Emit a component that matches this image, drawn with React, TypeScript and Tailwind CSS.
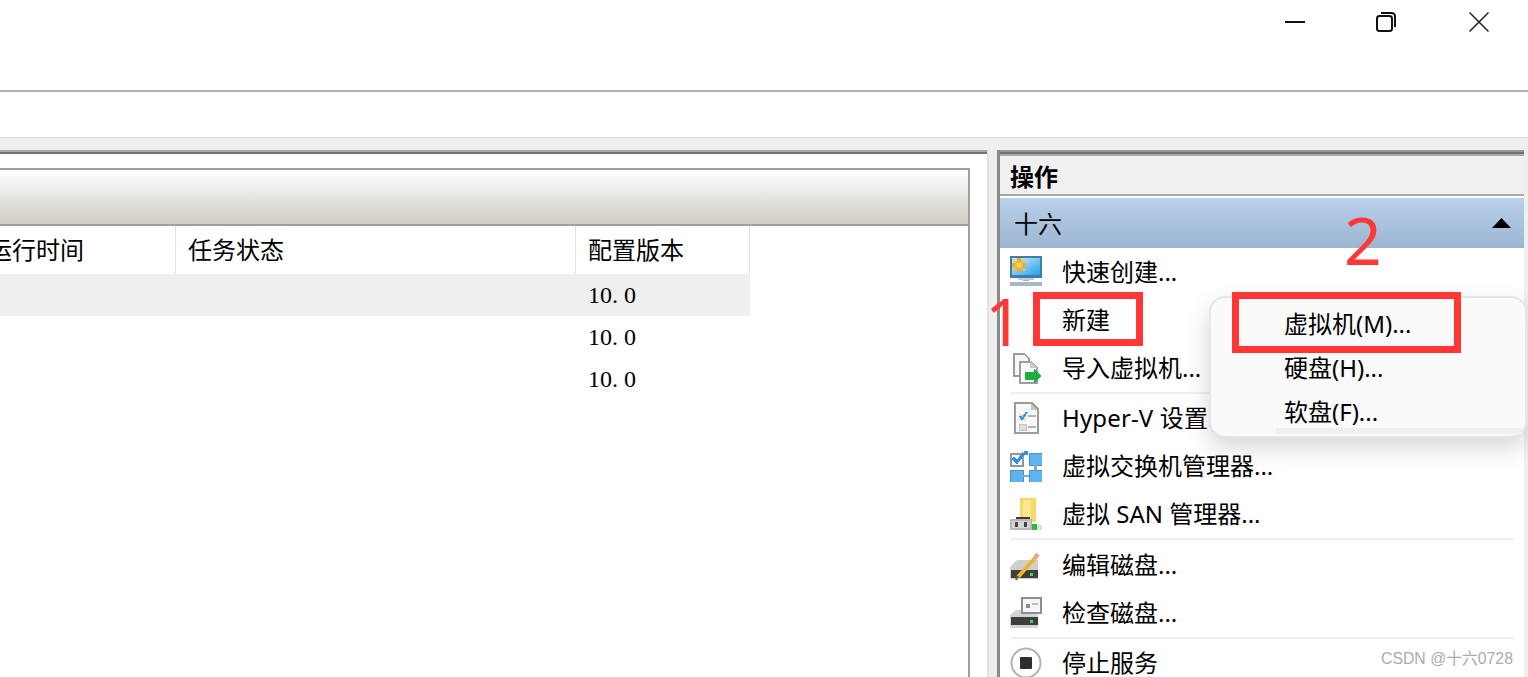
import React from "react";

const Monitor = () => (
  <svg width="32" height="32" viewBox="0 0 32 32" shapeRendering="crispEdges">
    <defs>
      <linearGradient id="mon" x1="0" y1="0" x2="1" y2="1">
        <stop offset="0" stopColor="#d0edfd" />
        <stop offset="1" stopColor="#22a0ee" />
      </linearGradient>
    </defs>
    <rect x="0" y="0" width="32" height="22" fill="#3d7ea8" />
    <rect x="2" y="2" width="28" height="17" fill="url(#mon)" />
    <rect x="13" y="22" width="6" height="3" fill="#9fb0c0" />
    <rect x="8" y="22" width="16" height="2" fill="#c4ced8" />
    <rect x="0" y="26" width="32" height="4" fill="#a9b8c7" />
    <rect x="7" y="2" width="4" height="14" fill="#f7a823" />
    <rect x="2" y="7" width="14" height="4" fill="#f7a823" />
    <rect x="5" y="5" width="8" height="8" fill="#f9b733" />
    <rect x="7" y="7" width="4" height="4" fill="#ffd76a" />
    <rect x="3" y="3" width="2" height="2" fill="#fbc34a" />
    <rect x="13" y="3" width="2" height="2" fill="#fbc34a" />
    <rect x="3" y="13" width="2" height="2" fill="#fbc34a" />
    <rect x="13" y="13" width="2" height="2" fill="#fbc34a" />
  </svg>
);

const ImportIcon = () => (
  <svg width="32" height="32" viewBox="0 0 32 32" shapeRendering="crispEdges">
    <path d="M3.5 1.5H14L19 6.5V23.5H3.5Z" fill="#f6f6f6" stroke="#9a9a9a" strokeWidth="2" />
    <path d="M9.5 9.5H21L26.5 15V30.5H9.5Z" fill="#fafafa" stroke="#9e9e9e" strokeWidth="2" />
    <path d="M20 9L27 16H20Z" fill="#c9c9c9" />
    <path d="M15 20H24V17L32 24L24 31V28H15Z" fill="#1fae3c" />
  </svg>
);

const SettingsIcon = () => (
  <svg width="32" height="32" viewBox="0 0 32 32" shapeRendering="crispEdges">
    <path d="M5 1H22L28 7V31H5Z" fill="#f9f9f9" stroke="#9c9c9c" strokeWidth="2" />
    <path d="M21 2L27 8H21Z" fill="#c4c4c4" />
    <rect x="9" y="12" width="7" height="7" fill="#d7e7f5" />
    <path d="M10 14L12 17L17 10" fill="none" stroke="#3b8ee6" strokeWidth="2" />
    <rect x="18" y="13" width="8" height="2" fill="#b5b5b5" />
    <rect x="9" y="22" width="7" height="6" fill="#dedede" stroke="#c4c4c4" />
    <rect x="18" y="24" width="8" height="2" fill="#b5b5b5" />
  </svg>
);

const SwitchIcon = () => (
  <svg width="32" height="32" viewBox="0 0 32 32" shapeRendering="crispEdges">
    <rect x="1" y="4" width="12" height="12" fill="#f4f4f4" stroke="#8d98a3" strokeWidth="2" />
    <path d="M3 8L7 12L14 3" fill="none" stroke="#2f8fe8" strokeWidth="3" />
    <rect x="14" y="1" width="4" height="4" fill="#2f8fe8" />
    <rect x="19" y="3" width="13" height="12" fill="#5cb4f0" stroke="#4b93c4" />
    <rect x="0" y="20" width="13" height="12" fill="#5cb4f0" stroke="#4b93c4" />
    <rect x="19" y="20" width="13" height="12" fill="#5cb4f0" stroke="#4b93c4" />
    <rect x="24" y="15" width="3" height="5" fill="#8aa4b8" />
    <rect x="13" y="25" width="6" height="2" fill="#8aa4b8" />
  </svg>
);

const SanIcon = () => (
  <svg width="32" height="32" viewBox="0 0 32 32" shapeRendering="crispEdges">
    <rect x="10" y="0" width="16" height="24" fill="#f7d768" />
    <rect x="13" y="2" width="8" height="20" fill="#fbe88f" />
    <rect x="6" y="19" width="14" height="3" fill="#3a3a3a" />
    <rect x="0" y="21" width="22" height="11" fill="#b9b9b9" />
    <rect x="2" y="23" width="18" height="7" fill="#d4d4d4" />
    <rect x="5" y="24" width="3" height="5" fill="#444" />
    <rect x="14" y="24" width="3" height="5" fill="#444" />
    <rect x="22" y="26" width="5" height="6" fill="#35b34a" />
    <rect x="27" y="27" width="5" height="5" fill="#cfe8d0" />
  </svg>
);

const EditDiskIcon = () => (
  <svg width="32" height="32" viewBox="0 0 32 32">
    <path d="M0 18L7 11H28V30H0Z" fill="#cfcfcf" />
    <rect x="1" y="21" width="27" height="8" fill="#3f3f3f" />
    <rect x="20" y="24" width="3" height="3" fill="#3bdc55" />
    <path d="M8 28L25 9" stroke="#f0b428" strokeWidth="4" />
    <path d="M25 9L28 5" stroke="#f09a9a" strokeWidth="4" />
    <path d="M6 31L8 27" stroke="#7a5a20" strokeWidth="2" />
  </svg>
);

const CheckDiskIcon = () => (
  <svg width="32" height="32" viewBox="0 0 32 32" shapeRendering="crispEdges">
    <path d="M0 19L5 13H28V31H0Z" fill="#d4d4d4" />
    <rect x="1" y="20" width="27" height="8" fill="#3d3d3d" />
    <rect x="20" y="23" width="3" height="3" fill="#3bdc55" />
    <rect x="12" y="1" width="19" height="15" fill="#f6f6f6" stroke="#8e8e8e" strokeWidth="2" />
    <rect x="16" y="7" width="4" height="4" fill="#8e8e8e" />
    <rect x="22" y="6" width="6" height="2" fill="#bdbdbd" />
  </svg>
);

const StopIcon = () => (
  <svg width="32" height="32" viewBox="0 0 32 32">
    <circle cx="16" cy="16" r="14.5" fill="#fff" stroke="#b3b3b3" strokeWidth="2" />
    <rect x="10" y="10" width="12" height="12" rx="1" fill="#2e2e2e" />
  </svg>
);

function Action({ icon, label, className }: { icon?: React.ReactNode; label: string; className: string }) {
  return (
    <div className={`flex shrink-0 items-center pl-[10px] gap-5 whitespace-nowrap ${className}`}>
      <div className="w-8 h-8 shrink-0">{icon}</div>
      <span>{label}</span>
    </div>
  );
}

const Sep = () => <div className="h-[2px] shrink-0 ml-[10px] mr-[10px] bg-[#efefef]" />;

function Row({ shaded }: { shaded?: boolean }) {
  return (
    <div className={`grid grid-cols-[576px_174px] w-[750px] h-[42px] items-center ${shaded ? "bg-[#efefef]" : ""}`}>
      <div />
      <div className="pl-3 font-['Liberation_Serif','Noto_Sans_CJK_SC',serif]">
        10<span className="pr-1.5">.</span>0
      </div>
    </div>
  );
}

export default function App() {
  return (
    <div className="relative w-[1528px] h-[677px] overflow-hidden bg-white flex flex-col text-[24px] leading-none text-black font-['Noto_Sans','Noto_Sans_CJK_SC',sans-serif]">
      {/* title bar */}
      <div className="h-[90px] shrink-0 flex justify-end items-start pt-3 pr-[39px]">
        <svg width="20" height="20" viewBox="0 0 20 20" className="mr-[71px]">
          <rect x="0" y="9" width="20" height="2" fill="#111" />
        </svg>
        <svg width="20" height="20" viewBox="0 0 20 20" fill="none" stroke="#111" strokeWidth="2" className="mr-[73px]">
          <rect x="1" y="4" width="15" height="15" rx="2.5" />
          <path d="M5 1H15.5C17.5 1 19 2.5 19 4.5V15" />
        </svg>
        <svg width="20" height="20" viewBox="0 0 20 20" fill="none" stroke="#222" strokeWidth="1.5">
          <path d="M0.5 0.5L19.5 19.5M19.5 0.5L0.5 19.5" />
        </svg>
      </div>
      <div className="h-[2px] shrink-0 bg-[#b0b0b0]" />
      {/* toolbar */}
      <div className="h-[46px] shrink-0 bg-white border-b border-[#dcdcdc]" />
      {/* main */}
      <div className="flex-1 min-h-0 bg-[#efefef] pt-3 flex">
        {/* centre pane */}
        <div className="w-[989px] shrink-0 border-r-2 border-[#e2e2e2] bg-white flex flex-col">
          <div className="h-[4px] shrink-0 bg-[#707070] border-t-2 border-[#a8a8a8]" />
          <div className="flex-1 min-h-0 pt-[14px]">
            <div className="w-[970px] h-full border-t-2 border-r-2 border-[#a0a0a0]">
              <div className="h-[56px] border-b-2 border-[#a0a0a0] bg-gradient-to-b from-white to-[#d0ccc4]" />
              <div className="grid grid-cols-[176px_400px_174px] w-[750px] h-[48px]">
                <div className="border-r border-[#e2e2e2] flex items-center justify-end pr-[91px] overflow-hidden whitespace-nowrap">
                  运行时间
                </div>
                <div className="border-r border-[#e2e2e2] flex items-center pl-3">任务状态</div>
                <div className="border-r border-[#e2e2e2] flex items-center pl-3">配置版本</div>
              </div>
              <Row shaded />
              <Row />
              <Row />
            </div>
          </div>
        </div>
        {/* actions pane */}
        <div className="ml-2 w-[527px] shrink-0 flex flex-col overflow-hidden bg-white border-l-[3px] border-[#8a8a8a]">
          <div className="h-[6px] shrink-0 bg-[#aaaaaa] border-t-2 border-b-2 border-t-[#999999] border-b-[#aaaaaa]">
            <div className="h-[2px] bg-[#707070]" />
          </div>
          <div className="h-[38px] shrink-0 bg-[#f0f0f0] flex items-center pl-[10px] pt-[3px] font-bold">操作</div>
          <div className="h-[2px] shrink-0 bg-[#a8a8a8]" />
          <div className="h-[2px] shrink-0 bg-white" />
          <div className="h-[50px] shrink-0 bg-gradient-to-b from-[#b9d1ea] to-[#9cb5d1] flex items-center justify-between pl-[14px] pr-[13px]">
            <span className="mt-[2px]">十六</span>
            <svg width="19" height="10" viewBox="0 0 19 10">
              <path d="M9.5 0L19 10H0Z" fill="#000" />
            </svg>
          </div>
          <Action className="h-[48px]" icon={<Monitor />} label="快速创建..." />
          <Action className="h-[48px]" label="新建" />
          <Action className="h-[48px]" icon={<ImportIcon />} label="导入虚拟机..." />
          <Sep />
          <Action className="h-[48px] tracking-[0.15px]" icon={<SettingsIcon />} label="Hyper-V 设置..." />
          <Action className="h-[48px]" icon={<SwitchIcon />} label="虚拟交换机管理器..." />
          <Action className="h-[48px]" icon={<SanIcon />} label="虚拟 SAN 管理器..." />
          <Sep />
          <Action className="h-[49px]" icon={<EditDiskIcon />} label="编辑磁盘..." />
          <Action className="h-[48px]" icon={<CheckDiskIcon />} label="检查磁盘..." />
          <Sep />
          <Action className="h-[48px]" icon={<StopIcon />} label="停止服务" />
        </div>
      </div>

      {/* context menu */}
      <div className="absolute left-[1209px] top-[296px] w-[318px] h-[142px] rounded-[16px] border-2 border-[#e6e6e6] bg-[#fafafa] shadow-[0_10px_24px_rgba(0,0,0,0.16)] flex flex-col pt-[4px] pl-[73px]">
        <div className="h-[44px] shrink-0 flex items-center">虚拟机(M)...</div>
        <div className="h-[44px] shrink-0 flex items-center">硬盘(H)...</div>
        <div className="h-[44px] shrink-0 flex items-center">软盘(F)...</div>
        <div className="absolute left-[65px] right-[3px] bottom-[2px] h-[6px] bg-[#f0f0f0]" />
      </div>

      {/* annotations */}
      <div className="absolute left-[1033px] top-[292px] w-[110px] h-[54px] border-[7px] border-[#ff3737]" />
      <div className="absolute left-[1232px] top-[292px] w-[229px] h-[61px] border-[7px] border-[#ff3737]" />
      <div className="absolute left-[985px] top-[285px] text-[66px] leading-[70px] text-[#ff3737] font-['Noto_Sans',sans-serif]">1</div>
      <div className="absolute left-[1344px] top-[204px] text-[66px] leading-[70px] text-[#ff3737] font-['Noto_Sans',sans-serif]">2</div>

      {/* watermark */}
      <div className="absolute left-[1381px] top-[651px] text-[15.8px] leading-[16px] text-[#ababab] font-['Liberation_Sans','Noto_Sans_CJK_SC',sans-serif]">
        CSDN @十六0728
      </div>
    </div>
  );
}
